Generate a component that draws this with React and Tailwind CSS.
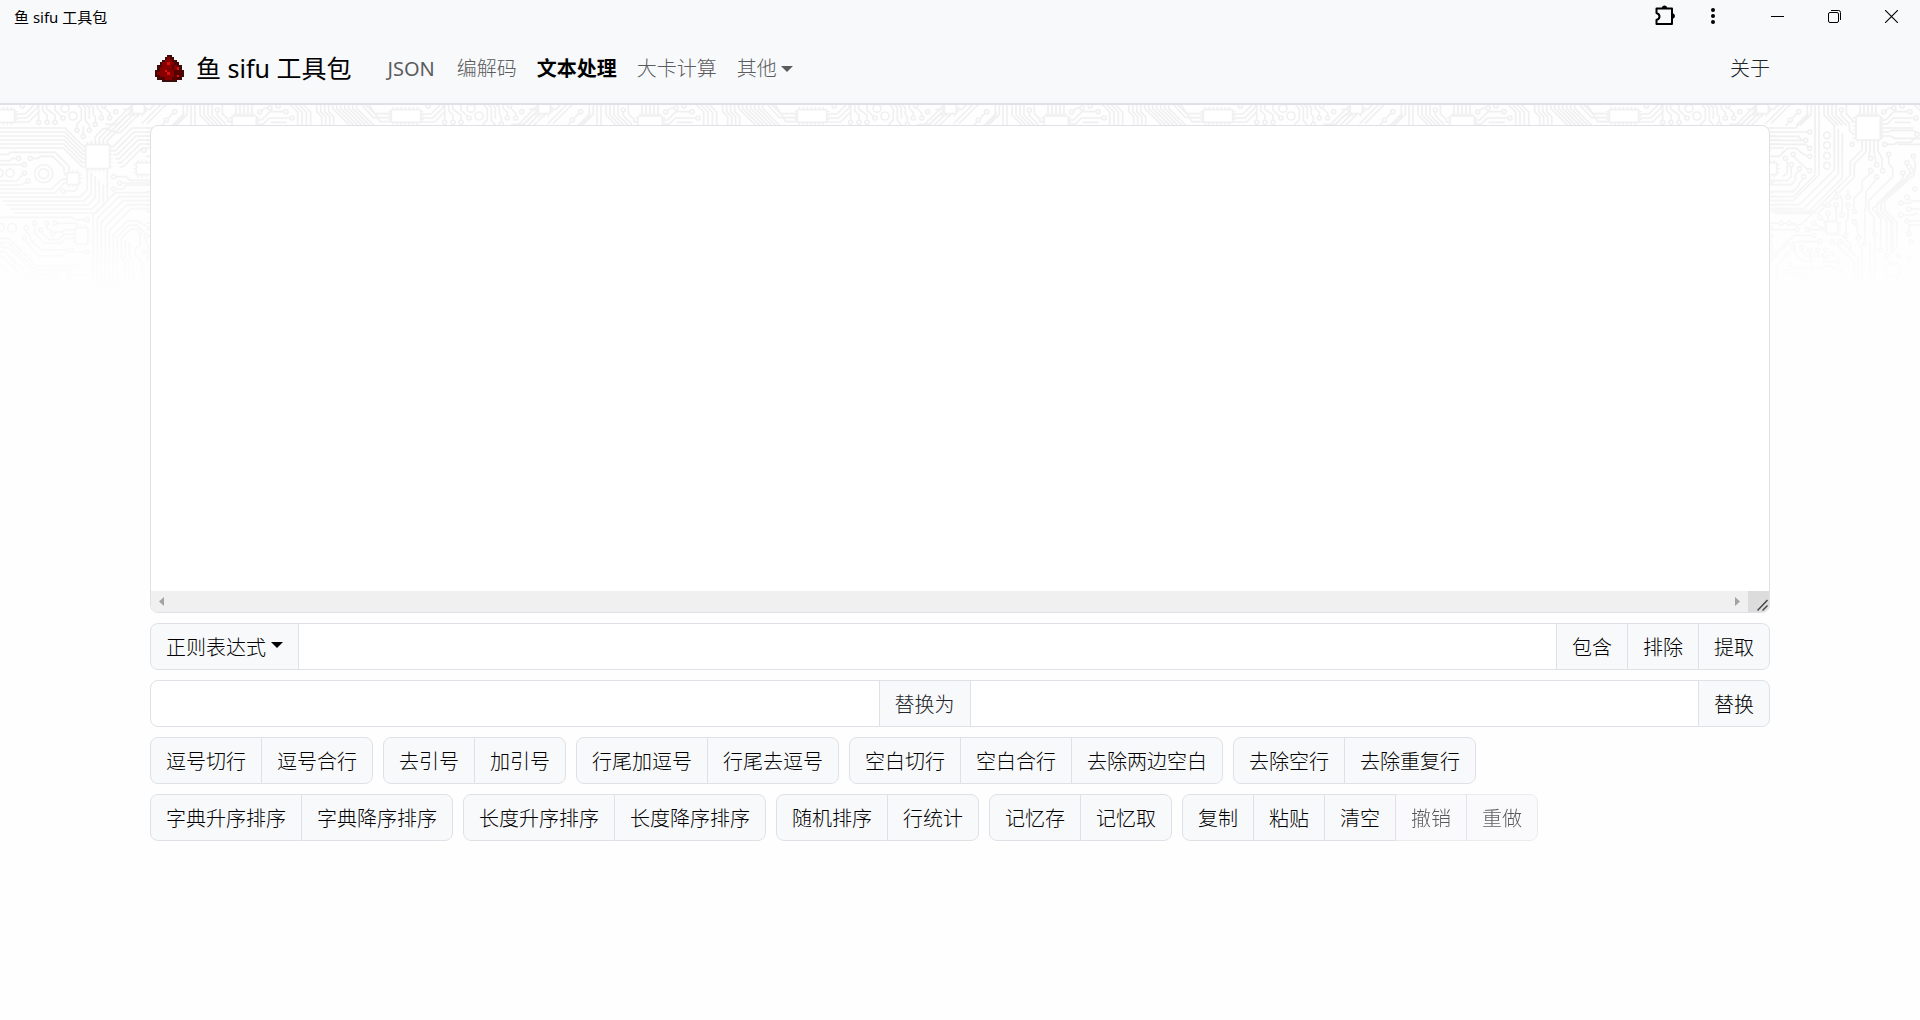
import React, { useState } from "react";

const NAV_ITEMS = ["JSON", "编解码", "文本处理", "大卡计算"];

const ACTION_ROWS = [
  [
    ["逗号切行", "逗号合行"],
    ["去引号", "加引号"],
    ["行尾加逗号", "行尾去逗号"],
    ["空白切行", "空白合行", "去除两边空白"],
    ["去除空行", "去除重复行"],
  ],
  [
    ["字典升序排序", "字典降序排序"],
    ["长度升序排序", "长度降序排序"],
    ["随机排序", "行统计"],
    ["记忆存", "记忆取"],
    ["复制", "粘贴", "清空", "撤销", "重做"],
  ],
];

const DISABLED = ["撤销", "重做"];

// one letter per pixel, dots are transparent
const REDSTONE = [
  ".....kk.....",
  "....kmdk....",
  "...kmmmdk...",
  "..kmmrmmdk..",
  ".kdmmmmdmdk.",
  ".kmmmmmdmrk.",
  "kdmmrmmmdddk",
  "kmmmmrmmdddk",
  "kdmmmmmmdrdk",
  ".kkdmmmdddk.",
  "...kkkkkk...",
];

const REDSTONE_COLORS = { k: "#3f0c0c", d: "#560000", m: "#860000", r: "#d81010" };

// x, y, width, height
const CHIPS = [
  [-44, 44, 88, 38],
  [1174, 44, 88, 38],
  [397, 20, 36, 36],
  [257, 149, 72, 72],
  [201, 233, 36, 36],
  [409, 203, 49, 36],
  [226, 398, 37, 48],
  [168, 525, 36, 36],
  [606, 380, 36, 36],
  [563, 483, 36, 36],
  [788, 507, 37, 36],
  [696, 63, 73, 72],
];

// x, y, radius
const PADS = [
  [67, 33], [116, 82], [141, 82], [165, 82], [189, 69], [195, 40, 12], [219, 63, 12],
  [231, 106], [268, 106], [286, 88], [250, 124], [304, 69], [329, 69], [347, 50],
  [311, 33], [524, 50], [499, 75], [652, 45], [779, 51], [810, 39], [834, 33],
  [858, 50], [876, 69], [56, 190], [91, 190], [73, 209], [73, 234], [85, 258],
  [30, 234, 12], [-3, 234, 12], [131, 236, 27], [131, 236, 15], [189, 288], [341, 245],
  [359, 264], [341, 282], [432, 166], [262, 374], [36, 398, 13], [1, 398, 12],
  [79, 398], [104, 385], [140, 385], [165, 385], [122, 404], [158, 416], [73, 428],
  [213, 465], [262, 471], [231, 512], [420, 410], [438, 422], [432, 470], [2, 530, 18],
  [557, 111], [545, 136], [557, 160], [557, 184], [508, 178], [484, 190], [502, 209],
  [526, 221], [557, 227], [539, 245], [609, 121, 10], [609, 151, 10], [609, 182, 10],
  [609, 212, 10], [685, 148], [782, 148], [740, 190], [758, 209], [740, 227],
  [776, 227], [758, 245], [794, 178], [868, 184], [849, 203], [837, 233], [873, 282],
  [849, 306], [831, 324], [855, 342], [831, 360], [849, 378], [855, 416], [861, 440],
  [855, 489], [879, 118], [636, 306], [672, 306], [612, 330], [636, 330], [672, 330],
  [612, 355], [654, 360], [691, 349], [588, 367], [691, 380], [472, 385], [496, 385],
  [569, 385], [520, 404], [551, 404], [569, 421], [666, 421], [588, 440], [624, 440],
  [648, 440], [703, 428], [752, 416], [721, 447], [770, 465], [806, 465], [508, 458],
  [532, 458], [557, 465], [581, 465], [605, 465], [490, 477], [624, 477], [642, 500],
  [496, 507], [648, 525], [788, 483], [825, 483],
];

// path, copies, x step, y step
const TRACES = [
  // top band
  ["M44 57H75L100 32V24M44 69H80L112 37V24M44 81H86L116 51"],
  ["M116 76V24M141 76V60L128 47V24M165 76V60L140 42V24M184 64L165 45V24"],
  ["M207 30L215 24H230L244 42V74L231 88V100M268 100V90L256 76V38L242 24"],
  ["M250 118V92M268 72V38L254 24M286 82V66L280 58V38L266 24M304 63V52L292 40V24M329 63V54L304 30"],
  ["M370 43H397M316 88H352L380 60L397 58M433 43H450L468 24"],
  ["M425 86L487 24", 2, 16, 0],
  ["M505 69L519 55M494 81L485 92M516 92L550 58V24M528 92L562 58V24"],
  ["M573 24V240L508 305H438M585 24V240L508 317H438"],
  ["M631 90V225L527 329H438", 3, 12, 12],
  ["M600 24V60L631 91M612 24V60L643 91M624 24V60L655 91M636 24V60L667 91"],
  ["M652 51V62L676 86V105L690 120M667 24V56L684 73V80H696"],
  ["M708 24V63", 5, 12, 0],
  ["M768 75H785L810 50H852M768 87H790L808 69H870M812 82H860M785 46L795 39H804"],
  ["M768 99H868M768 111H795L803 106H868L876 112M768 123H800L812 130H890"],
  ["M844 24H866L893 51V92", 4, 13, 0],
  ["M950 24V50L965 65V92", 4, 12, 0],
  ["M998 24V40L1050 92", 7, 12, 0],
  ["M1080 24L1120 68H1174M1092 24L1124 56H1174M1104 24L1140 80H1174"],
  // buses around the square chip
  ["M-5 99H195L251 155H257", 6, -1, 12],
  ["M-5 178H25L31 172H165L207 214V233M-5 197H30L37 190H50M-5 209H67"],
  ["M97 190H115L121 184H158L192 218V232L201 238M-5 258H50L68 239M-5 270H62L80 262"],
  ["M-5 282H155L185 253H201M-5 294H165L192 264H201M195 288H226L231 280V269"],
  ["M-5 306H240L262 284V221", 5, 12, 12],
  ["M-5 367H218L226 374H256M171 385H228L234 391"],
  ["M328 155H340L396 99H450", 6, 6, 12],
  ["M286 149V125L310 101H325L402 24", 4, 12, 4],
  ["M262 149V143M274 149V137"],
  ["M280 590V358L345 293H450", 5, 12, 12],
  ["M322 221V318L276 364"],
  ["M347 245H378L390 256H450M365 264H450M347 282H370L378 270H450"],
  ["M340 590V420L382 378H412L450 400M352 590V424L388 390H410L450 425"],
  ["M376 560V500L364 488V430L392 402H414M388 560V500L376 488V436M400 560V500L388 488V440"],
  ["M420 416V450L406 464V480L425 500V560M438 428V440L444 446V480"],
  // lower left
  ["M104 391V415L134 445H180L195 430H226M122 410L145 433H176L192 418H226"],
  ["M140 391V400L158 410M158 422L170 410H190L196 404H226"],
  ["M79 404V410L92 424V434L124 465H207M73 434L116 483H185L196 471H256"],
  ["M-5 430H26L108 512H225", 3, 0, 13],
  ["M-5 470H14L90 546H168M-5 484H8L80 556H168M140 525H168M204 540H262"],
  ["M-5 442H-1L14 458H22"],
  // traces right of the textarea
  ["M438 99H515L551 63V50"],
  ["M438 111H551M438 124H524L533 136M438 136H539M438 148H543L555 157"],
  ["M438 184H466L490 160H518L530 172L551 184M508 184L551 224M484 196L490 202V234L476 245M502 215V245L490 257H438"],
  ["M526 227L514 239V256L502 269H438M539 251L526 264V270L508 290H438"],
  ["M714 135V165L679 200V240L570 349H438", 2, 12, 6],
  ["M738 135V165L734 184M750 135V170L756 203M762 135V168L774 190V221"],
  ["M740 233L715 258V285L690 310V340M758 251L726 290V330L722 350V441"],
  ["M788 148H810L820 142H860L872 130H890M794 184V205L806 220V245L735 316V350L750 366V410"],
  ["M820 148H890M868 190L874 205V225L747 340V345L770 370V459", 1, 0, 0],
  ["M849 209V216L858 226V240L770 318V345L806 380V459", 2, 12, 0],
  ["M837 239V250L760 325V350L788 378V477", 2, 12, 0],
  ["M849 312L870 318H890M837 324H865M861 342H890M837 360H870L880 354M855 378H890M855 410V390H890"],
  ["M636 300V285M672 300V285M636 336V380M654 354V315L648 300M672 336V370L666 380V415"],
  ["M606 330H590L530 390H502M612 361V380M594 370L606 384M575 385L590 398H606M557 404H606"],
  ["M438 385H466M478 385H490M502 385H514M438 404H514M575 421H530L510 421L438 490"],
  ["M582 440H520L490 448L438 502M630 440L690 500V580M654 440L702 490V580"],
  ["M703 434V450L714 462V580M642 420H652L679 447V470M691 386L700 394V410L712 430"],
  ["M508 464L520 485L540 500H563M532 464L548 483H563M557 471V483M581 471V483M605 471L594 483"],
  ["M490 483L460 510V560M496 513L520 519H563M599 500H636M599 489L618 480M599 512H620L636 525"],
  ["M470 525H540M470 537H560M520 546H600M738 440V580M752 422V580"],
];

function CircuitBackdrop() {
  return (
    <svg
      aria-hidden="true"
      className="absolute inset-x-0 top-0 -z-10 h-48 w-full [mask-image:linear-gradient(to_bottom,black_20%,transparent_98%)]"
    >
      <defs>
        <pattern
          id="circuit"
          width="1218"
          height="600"
          patternUnits="userSpaceOnUse"
          patternTransform="translate(0 -10) scale(0.33333)"
        >
          <g fill="none" stroke="#f0f0f0" strokeWidth="5">
            {TRACES.map(([d, copies = 1, dx = 0, dy = 0], i) =>
              Array.from({ length: copies }, (_, n) => (
                <path key={`${i}-${n}`} d={d} transform={`translate(${n * dx} ${n * dy})`} />
              ))
            )}
            {CHIPS.map(([x, y, w, h], i) => (
              <g key={i}>
                <path
                  d={`M${x + 4} ${y - 5}H${x + w - 4}M${x + 4} ${y + h + 5}H${x + w - 4}`}
                  strokeWidth="7"
                  strokeDasharray="4 8"
                />
                <path
                  d={`M${x - 5} ${y + 4}V${y + h - 4}M${x + w + 5} ${y + 4}V${y + h - 4}`}
                  strokeWidth="7"
                  strokeDasharray="4 8"
                />
                <rect x={x} y={y} width={w} height={h} rx="2" fill="#fff" />
              </g>
            ))}
            {PADS.map(([x, y, r = 6], i) => (
              <circle key={i} cx={x} cy={y} r={r} fill={r > 14 ? "none" : "#fff"} />
            ))}
          </g>
        </pattern>
      </defs>
      <rect width="100%" height="100%" fill="url(#circuit)" />
    </svg>
  );
}

function RedstoneIcon() {
  return (
    <svg viewBox="0 0 12 11" className="h-[27px] w-[29px]" preserveAspectRatio="none" shapeRendering="crispEdges" aria-hidden="true">
      {REDSTONE.map((row, y) =>
        [...row].map((c, x) =>
          c === "." ? null : (
            <rect key={`${x}-${y}`} x={x} y={y} width="1" height="1" fill={REDSTONE_COLORS[c]} />
          )
        )
      )}
    </svg>
  );
}

function Caret() {
  return (
    <svg viewBox="0 0 12 6" className="h-[6px] w-[12px]" fill="currentColor" aria-hidden="true">
      <path d="M0 0H12L6 6Z" />
    </svg>
  );
}

function TitleBar() {
  return (
    <div className="flex h-8 items-center pl-[14px]">
      <span className="pt-0.5 text-[15px] leading-6 font-normal text-black">鱼 sifu 工具包</span>
      <div className="ml-auto flex h-full items-center">
        <button aria-label="扩展程序" className="flex w-12 justify-center">
          <svg width="22" height="22" viewBox="0 0 22 22">
            <path
              d="M2.500 3.500H18V19H2.500V15C6.500 13.500 6.500 9.500 2.500 8Z"
              fill="none"
              stroke="#000"
              strokeWidth="2"
              strokeLinejoin="round"
            />
            <path d="M8 3.500A2.500 2.700 0 0 1 13 3.500ZM18 8.500A2.700 2.500 0 0 1 18 13.500Z" stroke="#000" strokeWidth="0.500" />
          </svg>
        </button>
        <button aria-label="菜单" className="mr-3 flex w-12 justify-center">
          <svg width="6" height="18" viewBox="0 0 6 18">
            <circle cx="3" cy="3" r="2" />
            <circle cx="3" cy="9" r="2" />
            <circle cx="3" cy="15" r="2" />
          </svg>
        </button>
        <button aria-label="最小化" className="flex w-[57px] justify-center">
          <svg width="13" height="13" viewBox="0 0 13 13" stroke="#000">
            <path d="M0 6.500H13" />
          </svg>
        </button>
        <button aria-label="还原" className="flex w-[57px] justify-center">
          <svg width="13" height="13" viewBox="0 0 13 13" fill="none" stroke="#000">
            <rect x="0.500" y="2.500" width="10" height="10" rx="1.500" />
            <path d="M3 0.500H10.500A2 2 0 0 1 12.500 2.500V10" />
          </svg>
        </button>
        <button aria-label="关闭" className="flex w-[57px] justify-center">
          <svg width="13" height="13" viewBox="0 0 13 13" stroke="#000" strokeWidth="1.100">
            <path d="M0 0L13 13M13 0L0 13" />
          </svg>
        </button>
      </div>
    </div>
  );
}

const navItemClass = (item) => {
  if (item === "文本处理") return "px-[10px] font-bold text-black";
  if (item === "JSON") return "px-3 font-normal text-[#5b5c5d]";
  return "px-[10px] text-[#5b5c5d]";
};

function Navbar() {
  return (
    <nav className="mx-auto flex h-[71px] w-full max-w-[1650px] items-center px-[15px] pt-0.5 text-xl">
      <a href="#" className="mr-6 flex items-center gap-3 pl-[5px] text-[25px] font-normal text-black">
        <RedstoneIcon />
        <span>鱼 sifu 工具包</span>
      </a>
      {NAV_ITEMS.map((item) => (
        <a key={item} href="#" className={navItemClass(item)}>
          {item}
        </a>
      ))}
      <button aria-haspopup="menu" className="flex items-center gap-1 px-[10px] text-[#5b5c5d]">
        其他
        <Caret />
      </button>
      <a href="#" className="ml-auto text-[#212529]">
        关于
      </a>
    </nav>
  );
}

function ActionButton({ children, disabled }) {
  return (
    <button
      disabled={disabled}
      className="-ml-px h-[47px] shrink-0 border border-[#dee2e6] bg-[#f8f9fb] px-[15px] pt-0.5 text-black last:rounded-r-lg disabled:opacity-65"
    >
      {children}
    </button>
  );
}

export default function App() {
  const [text, setText] = useState("");
  const [pattern, setPattern] = useState("");
  const [search, setSearch] = useState("");
  const [replacement, setReplacement] = useState("");

  return (
    <div className="min-h-screen bg-[#fefefe] font-['Noto_Sans','Noto_Sans_CJK_SC',sans-serif] text-xl font-light">
      <header className="border-b-2 border-[#dee2e6] bg-[#f8f9fb]">
        <TitleBar />
        <Navbar />
      </header>

      <div className="relative isolate">
        <CircuitBackdrop />
        <main className="mx-auto flex w-full max-w-[1650px] flex-col gap-[10px] px-[15px] pt-5">
          <div className="overflow-hidden rounded-lg border border-[#dee2e6] bg-white">
            <textarea
              aria-label="文本"
              value={text}
              onChange={(e) => setText(e.target.value)}
              className="block h-[465px] w-full resize-none px-[15px] py-2 outline-none"
            />
            <div className="flex h-[21px] bg-[#f0f0f0] text-[#a3a3a3]">
              <div className="flex flex-1 items-center justify-between px-2">
                <svg width="5" height="9" viewBox="0 0 5 9" fill="currentColor" aria-hidden="true">
                  <path d="M5 0V9L0 4.500Z" />
                </svg>
                <svg width="5" height="9" viewBox="0 0 5 9" fill="currentColor" aria-hidden="true">
                  <path d="M0 0V9L5 4.500Z" />
                </svg>
              </div>
              <div className="flex w-[21px] items-end justify-end bg-[#dcdcdc] p-px">
                <svg width="11" height="12" viewBox="0 0 11 12" stroke="#404040" strokeWidth="1.400" aria-hidden="true">
                  <path d="M0.500 11.500L10.500 1M5.500 11.500L10.500 6.500" />
                </svg>
              </div>
            </div>
          </div>

          <div className="flex">
            <div className="relative">
              <select
                aria-label="匹配方式"
                className="h-[47px] w-[149px] appearance-none rounded-l-lg border border-[#dee2e6] bg-[#f8f9fb] pt-0.5 pl-[15px] text-black"
              >
                <option>正则表达式</option>
                <option>普通文本</option>
              </select>
              <span className="pointer-events-none absolute inset-y-0 right-4 flex items-center pb-1">
                <Caret />
              </span>
            </div>
            <input
              aria-label="匹配内容"
              value={pattern}
              onChange={(e) => setPattern(e.target.value)}
              className="-ml-px h-[47px] min-w-0 flex-1 border border-[#dee2e6] bg-white px-[15px] outline-none"
            />
            <ActionButton>包含</ActionButton>
            <ActionButton>排除</ActionButton>
            <ActionButton>提取</ActionButton>
          </div>

          <div className="flex">
            <input
              id="search"
              aria-label="查找"
              value={search}
              onChange={(e) => setSearch(e.target.value)}
              className="h-[47px] min-w-0 flex-1 rounded-l-lg border border-[#dee2e6] bg-white px-[15px] outline-none"
            />
            <label
              htmlFor="replacement"
              className="-ml-px flex h-[47px] items-center border border-[#dee2e6] bg-[#f8f9fb] px-[15px] pt-0.5 text-[#212529]"
            >
              替换为
            </label>
            <input
              id="replacement"
              value={replacement}
              onChange={(e) => setReplacement(e.target.value)}
              className="-ml-px h-[47px] min-w-0 flex-1 border border-[#dee2e6] bg-white px-[15px] outline-none"
            />
            <ActionButton>替换</ActionButton>
          </div>

          {ACTION_ROWS.map((groups, i) => (
            <div key={i} className="flex flex-wrap gap-[10px]">
              {groups.map((group) => (
                <div key={group[0]} className="flex pl-px *:first:rounded-l-lg">
                  {group.map((name) => (
                    <ActionButton key={name} disabled={DISABLED.includes(name)}>
                      {name}
                    </ActionButton>
                  ))}
                </div>
              ))}
            </div>
          ))}
        </main>
      </div>
    </div>
  );
}
